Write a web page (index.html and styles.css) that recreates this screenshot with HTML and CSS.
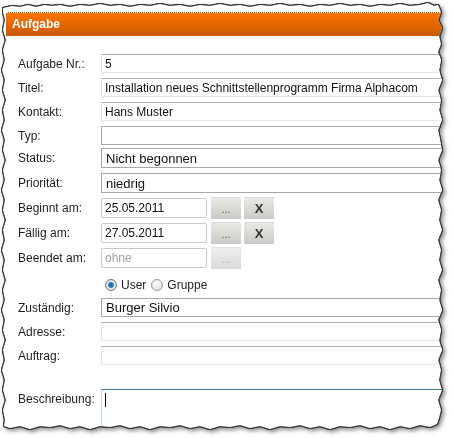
FILE: index.html
```html
<!DOCTYPE html>
<html lang="de">
<head>
    <meta charset="UTF-8">
    <title>Aufgabe</title>
    <link rel="stylesheet" href="styles.css">
</head>
<body>
    <div class="frame">
        <div class="sheet">
            <div class="panel">
                <div class="panel-head">Aufgabe</div>
                <form class="form">
                    <div class="row"><label>Aufgabe Nr.:</label><input class="field" type="text" value="5" readonly></div>
                    <div class="row"><label>Titel:</label><input class="field" type="text" value="Installation neues Schnittstellenprogramm Firma Alphacom" readonly></div>
                    <div class="row"><label>Kontakt:</label><input class="field" type="text" value="Hans Muster" readonly></div>
                    <div class="row"><label>Typ:</label><input class="field box" type="text" value="" readonly></div>
                    <div class="row status"><label>Status:</label><input class="field box big" type="text" value="Nicht begonnen" readonly></div>
                    <div class="row tall"><label>Priorität:</label><input class="field box big" type="text" value="niedrig" readonly></div>
                    <div class="row date"><label>Beginnt am:</label><input class="field date-field" type="text" value="25.05.2011" readonly><button type="button" class="btn">...</button><button type="button" class="btn btn-x">X</button></div>
                    <div class="row date"><label>Fällig am:</label><input class="field date-field" type="text" value="27.05.2011" readonly><button type="button" class="btn">...</button><button type="button" class="btn btn-x">X</button></div>
                    <div class="row date"><label>Beendet am:</label><input class="field date-field off" type="text" value="ohne" readonly><button type="button" class="btn off">...</button></div>
                    <div class="radio-row">
                        <span class="radio on"></span><span class="radio-label">User</span>
                        <span class="radio"></span><span class="radio-label">Gruppe</span>
                    </div>
                    <div class="row"><label>Zuständig:</label><input class="field box big" type="text" value="Burger Silvio" readonly></div>
                    <div class="row"><label>Adresse:</label><input class="field" type="text" value="" readonly></div>
                    <div class="row"><label>Auftrag:</label><input class="field" type="text" value="" readonly></div>
                    <div class="row memo"><label>Beschreibung:</label><div class="textarea"><span class="caret"></span></div></div>
                </form>
            </div>
        </div>
    </div>
</body>
</html>
```

FILE: styles.css
```css
* {
    box-sizing: border-box;
}
html, body {
    margin: 0;
    padding: 0;
    background: #fff;
    font-family: "Liberation Sans", Arial, sans-serif;
}
.frame {
    width: 454px;
    height: 438px;
    filter: drop-shadow(1px 0 0 #3a3a3a) drop-shadow(-1px 0 0 #3a3a3a) drop-shadow(0 1px 0 #3a3a3a) drop-shadow(0 -1px 0 #3a3a3a) drop-shadow(2px 2px 2px rgba(0, 0, 0, 0.45));
}
.sheet {
    width: 454px;
    height: 438px;
    background: #fff;
    padding: 12px 0 0 6px;
    overflow: hidden;
    clip-path: polygon(3px 8px, 12px 6px, 20px 7px, 28px 5px, 36px 7px, 44px 5px, 52px 6px, 60px 5px, 70px 7px, 80px 5px, 90px 6px, 100px 4px, 110px 6px, 120px 5px, 130px 7px, 140px 5px, 150px 6px, 160px 4px, 170px 6px, 180px 5px, 190px 7px, 200px 5px, 210px 6px, 220px 4px, 230px 6px, 240px 5px, 250px 7px, 260px 5px, 270px 6px, 280px 4px, 290px 6px, 300px 5px, 310px 7px, 320px 5px, 330px 6px, 340px 4px, 350px 6px, 360px 5px, 370px 7px, 380px 5px, 390px 6px, 400px 4px, 410px 6px, 420px 5px, 428px 3px, 434px 6px, 438px 5px,
        441px 12px, 438px 20px, 442px 28px, 439px 36px, 441px 44px, 438px 52px, 441px 60px, 439px 70px, 442px 80px, 438px 90px, 441px 100px, 439px 110px, 442px 120px, 438px 130px, 440px 140px, 442px 150px, 438px 160px, 441px 170px, 439px 180px, 442px 190px, 438px 200px, 441px 210px, 439px 220px, 442px 230px, 438px 240px, 441px 250px, 439px 260px, 442px 270px, 438px 280px, 441px 290px, 439px 300px, 442px 310px, 438px 320px, 441px 330px, 439px 340px, 442px 350px, 438px 360px, 441px 370px, 439px 380px, 442px 390px, 438px 400px, 441px 410px, 439px 418px, 437px 424px,
        430px 427px, 420px 425px, 410px 428px, 400px 426px, 390px 429px, 380px 426px, 370px 428px, 360px 425px, 350px 427px, 340px 426px, 330px 429px, 320px 426px, 310px 428px, 300px 425px, 290px 427px, 280px 426px, 270px 429px, 260px 426px, 250px 428px, 240px 425px, 230px 427px, 220px 426px, 210px 429px, 200px 426px, 190px 428px, 180px 425px, 170px 427px, 160px 426px, 150px 429px, 140px 426px, 130px 428px, 120px 425px, 110px 427px, 100px 426px, 90px 429px, 80px 426px, 70px 428px, 60px 425px, 50px 427px, 40px 426px, 30px 429px, 20px 426px, 10px 428px, 4px 426px,
        5px 420px, 3px 410px, 6px 400px, 3px 390px, 5px 380px, 2px 370px, 5px 360px, 3px 350px, 6px 340px, 3px 330px, 5px 320px, 2px 310px, 5px 300px, 3px 290px, 6px 280px, 3px 270px, 5px 260px, 2px 250px, 5px 240px, 3px 230px, 6px 220px, 3px 210px, 5px 200px, 2px 190px, 5px 180px, 3px 170px, 6px 160px, 3px 150px, 5px 140px, 2px 130px, 5px 120px, 3px 110px, 6px 100px, 3px 90px, 5px 80px, 2px 70px, 5px 60px, 3px 50px, 6px 40px, 3px 30px, 5px 20px, 3px 12px);
}
.panel {
    width: 440px;
}
.panel-head {
    height: 24px;
    border-top: 1px dotted #fff;
    background: linear-gradient(#ff7400, #c55a00);
    color: #fff;
    font-weight: bold;
    font-size: 12px;
    line-height: 22px;
    padding-left: 6px;
}
.form {
    display: flex;
    flex-direction: column;
    gap: 5px;
    padding-top: 18px;
    margin: 0;
}
.row {
    display: flex;
    align-items: center;
    height: 19px;
}
.row.date,
.row.tall {
    height: 20px;
}
.row.status {
    height: 20px;
    margin-top: -2px;
}
.row label {
    width: 95px;
    flex: none;
    padding-left: 12px;
    font-size: 12px;
    color: #1e1e1e;
}
.field {
    width: 345px;
    height: 19px;
    padding: 0 3px;
    border: 1px solid;
    border-color: #abadb3 #e2e3ea #e3e9ef #e2e3ea;
    font-family: "Liberation Sans", Arial, sans-serif;
    font-size: 12px;
    color: #111;
    background: #fff;
    outline: none;
}
.field.box {
    border-color: #a8a8a8;
}
.field.big {
    font-size: 13px;
    padding-left: 4px;
}
.status .field,
.tall .field {
    height: 20px;
}
.date-field {
    width: 106px;
    height: 20px;
    border-color: #c8c8c8;
    border-radius: 2px;
}
.date-field.off {
    color: #a0a0a0;
}
.btn {
    width: 30px;
    height: 22px;
    margin-left: 4px;
    padding: 0;
    border: none;
    border-top: 1px dotted #e4e4e4;
    background: linear-gradient(#e9e9e7, #c9cac6);
    color: #556;
    font-family: "Liberation Sans", Arial, sans-serif;
    font-size: 11px;
    line-height: 18px;
}
.btn-x {
    margin-left: 3px;
    font-size: 13px;
    font-weight: bold;
    color: #333;
}
.btn.off {
    background: linear-gradient(#eeeeec, #dadad8);
    color: #aab;
}
.radio-row {
    display: flex;
    align-items: center;
    height: 16px;
    margin: 4px 0 0 99px;
    font-size: 12px;
    color: #222;
}
.radio {
    width: 12px;
    height: 12px;
    border-radius: 50%;
    border: 1px solid #9a9a9a;
    background: radial-gradient(circle at 40% 35%, #fff, #d4d4d4);
    margin-right: 4px;
}
.radio.on {
    border-color: #6b7b8b;
    background: radial-gradient(circle, #1b5f93 0, #2f86c4 2.5px, #eaeaea 3.5px, #cfcfcf 6px);
}
.radio-label {
    margin-right: 5px;
}
.memo {
    align-items: flex-start;
    height: 40px;
    margin-top: 19px;
}
.memo label {
    padding-top: 3px;
}
.textarea {
    width: 345px;
    height: 40px;
    border: 1px solid #c5d7ea;
    border-top-color: #3b78ab;
    border-right: none;
    border-bottom: none;
    padding: 3px 3px;
}
.caret {
    display: block;
    width: 1px;
    height: 14px;
    background: #000;
}
```
